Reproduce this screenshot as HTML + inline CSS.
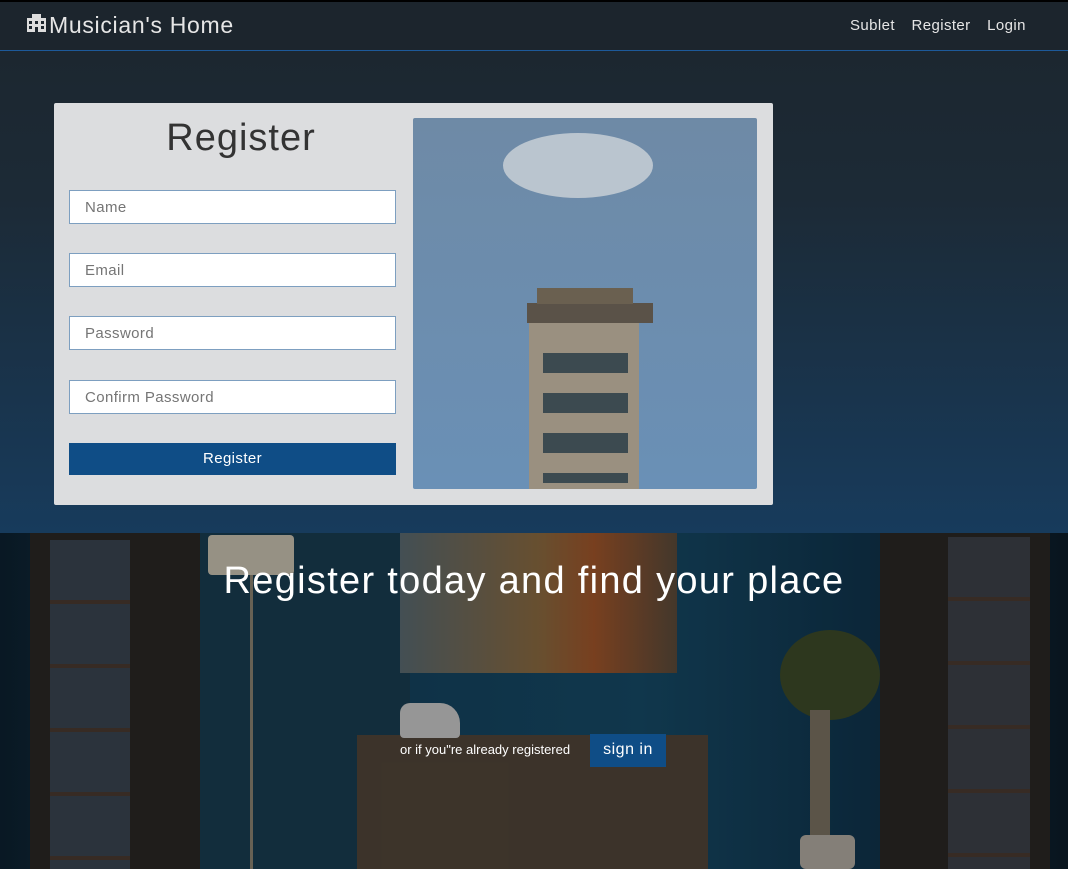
<!DOCTYPE html>
<html><head><style>
*{margin:0;padding:0;box-sizing:border-box}
body{width:1068px;height:869px;overflow:hidden;font-family:"Liberation Sans",sans-serif;background:#163a5a;position:relative}
.abs{position:absolute}
.nav{left:0;top:0;width:1068px;height:51px;background:#1c252d;border-top:2px solid #000;border-bottom:1px solid #1d5a9a}
.top{left:0;top:51px;width:1068px;height:482px;background:linear-gradient(#1c2730 0%,#1c2a36 30%,#173b5c 100%)}
.card{left:54px;top:103px;width:719px;height:402px;background:#dcdddf;border-radius:2px}
input{position:absolute;left:15px;width:327px;height:34px;border:1px solid #7d9fc0;background:#fff;font:15px "Liberation Sans",sans-serif;padding-left:15px;color:#777;letter-spacing:.4px}
.btn{position:absolute;left:15px;top:340px;width:327px;height:32px;background:#0f4d86;color:#fff;font-size:15px;text-align:center;line-height:32px;letter-spacing:.4px}
.dim{left:0;top:533px;width:1068px;height:336px;background:rgba(0,0,0,.25)}
</style></head><body>
<div class="abs nav">
 <svg class="abs" style="left:27px;top:12px" width="19" height="18" viewBox="0 0 19 18"><rect x="0" y="4" width="19" height="14" fill="#ddd"/><rect x="5" y="0" width="9" height="5" fill="#ddd"/><g fill="#1c252d"><rect x="2" y="7" width="3" height="3"/><rect x="8" y="7" width="3" height="3"/><rect x="14" y="7" width="3" height="3"/><rect x="2" y="12" width="3" height="3"/><rect x="14" y="12" width="3" height="3"/><rect x="8" y="13" width="3" height="5"/></g></svg>
 <div class="abs" style="left:49px;top:10px;color:#e6e6e6;font-size:23px;letter-spacing:.7px">Musician's Home</div>
 <div class="abs" style="left:850px;top:15px;color:#e6e6e6;font-size:15px;word-spacing:12px;letter-spacing:.4px">Sublet Register Login</div>
</div>
<div class="abs top"></div>
<!-- room -->
<div class="abs" style="left:0;top:533px;width:1068px;height:336px;background:linear-gradient(90deg,#0d2130 0%,#14405c 30%,#164a66 60%,#0f3048 85%,#0c1c28 100%)"></div>
<div class="abs" style="left:30px;top:533px;width:170px;height:336px;background:#2a2724"></div>
<div class="abs" style="left:50px;top:540px;width:80px;height:329px;background:repeating-linear-gradient(#3a4450 0 60px,#4a3a30 60px 64px)"></div>
<div class="abs" style="left:200px;top:533px;width:210px;height:336px;background:#183c50"></div>
<div class="abs" style="left:208px;top:535px;width:86px;height:40px;background:#c9c2b0;border-radius:4px"></div>
<div class="abs" style="left:250px;top:575px;width:3px;height:294px;background:#8a8270"></div>
<div class="abs" style="left:400px;top:533px;width:277px;height:140px;background:linear-gradient(90deg,#5a6a70,#8a6a40 50%,#a0552a 70%,#5a4a3a)"></div>
<div class="abs" style="left:880px;top:533px;width:170px;height:336px;background:#2a2724"></div>
<div class="abs" style="left:948px;top:537px;width:82px;height:332px;background:repeating-linear-gradient(#3c4048 0 60px,#4a3a30 60px 64px)"></div>
<div class="abs" style="left:357px;top:735px;width:351px;height:134px;background:#514538"></div>
<div class="abs" style="left:400px;top:703px;width:60px;height:35px;background:#c8c8c8;border-radius:10px 20px 4px 4px"></div>
<div class="abs" style="left:780px;top:630px;width:100px;height:90px;background:#3c4a28;border-radius:50%"></div>
<div class="abs" style="left:810px;top:710px;width:20px;height:130px;background:#7a7060"></div>
<div class="abs" style="left:800px;top:835px;width:55px;height:34px;background:#b0aaa0;border-radius:6px"></div>
<div class="abs dim"></div>
<div class="abs" style="left:0;top:560px;width:1068px;text-align:center;color:#fff;font-size:38px;letter-spacing:1.3px">Register today and find your place</div>
<div class="abs" style="left:400px;top:742px;color:#fff;font-size:13px">or if you"re already registered</div>
<div class="abs" style="left:590px;top:734px;width:76px;height:33px;background:#0f4d86;color:#fff;font-size:16px;text-align:center;line-height:32px;letter-spacing:.5px">sign in</div>
<!-- card -->
<div class="abs card">
 <div class="abs" style="left:15px;top:14px;width:344px;text-align:center;font-size:38px;letter-spacing:1px;color:#333">Register</div>
 <input style="top:87px" placeholder="Name">
 <input style="top:150px" placeholder="Email">
 <input style="top:213px" placeholder="Password">
 <input style="top:277px" placeholder="Confirm Password">
 <div class="btn">Register</div>
 <div class="abs" style="left:359px;top:15px;width:344px;height:371px;background:linear-gradient(#6e8aa6,#6a90b6);overflow:hidden;border-radius:2px">
  <div class="abs" style="left:90px;top:15px;width:150px;height:65px;background:#c8cfd6;border-radius:50%;opacity:.85"></div>
  <div class="abs" style="left:114px;top:185px;width:126px;height:20px;background:#5a5248"></div>
  <div class="abs" style="left:124px;top:170px;width:96px;height:16px;background:#6a6050"></div>
  <div class="abs" style="left:116px;top:205px;width:110px;height:166px;background:#9a9080"></div>
  <div class="abs" style="left:130px;top:215px;width:85px;height:150px;background:repeating-linear-gradient(#9a9080 0 20px,#3c4a50 20px 40px)"></div>
 </div>
</div>
</body></html>
